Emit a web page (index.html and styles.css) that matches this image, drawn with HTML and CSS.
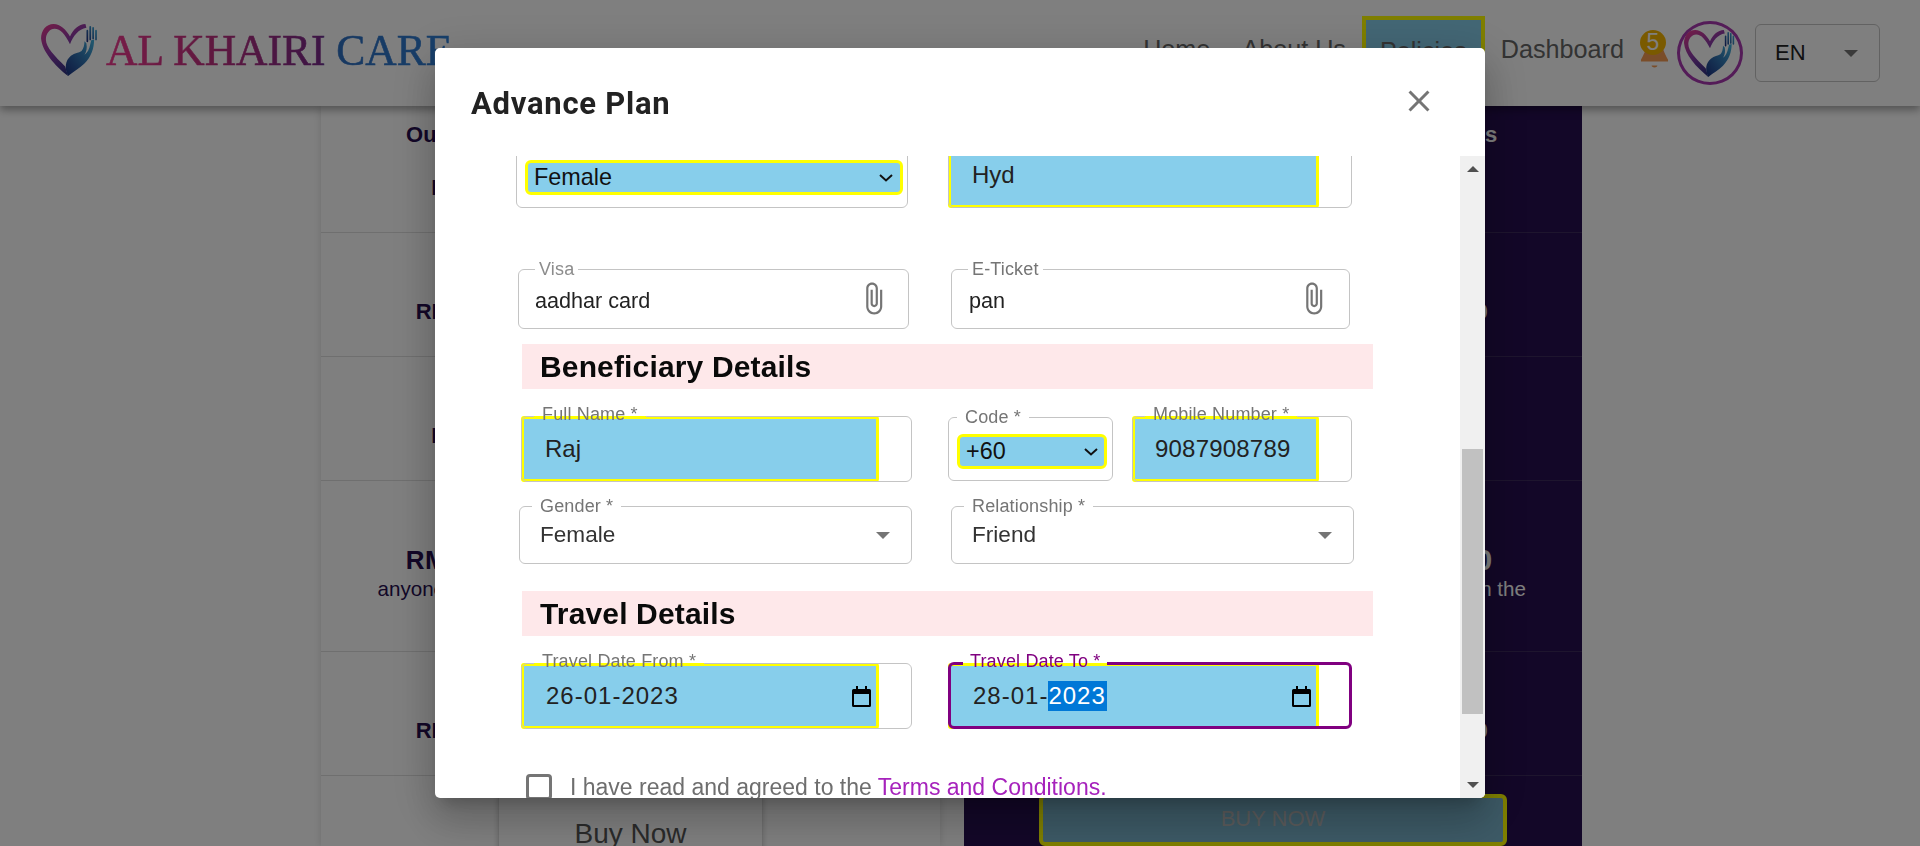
FILE: index.html
```html
<!DOCTYPE html>
<html lang="en">
<head>
    <meta charset="UTF-8">
    <meta name="viewport" content="width=device-width, initial-scale=1.0">
    <title>Al Khairi Care - Policies</title>
    <link rel="stylesheet" href="styles.css">
</head>
<body>
    <svg class="defs" width="0" height="0">
        <defs>
            <linearGradient id="heartGrad" x1="0" y1="0" x2="0.6" y2="1">
                <stop offset="0" stop-color="#f03a90"/>
                <stop offset="0.5" stop-color="#8a3aa8"/>
                <stop offset="1" stop-color="#24327e"/>
            </linearGradient>
            <linearGradient id="handGrad" x1="1" y1="0" x2="0" y2="1">
                <stop offset="0" stop-color="#44b4e0"/>
                <stop offset="1" stop-color="#1c2f80"/>
            </linearGradient>
            <symbol id="heartLogo" viewBox="0 0 60 56">
                <path fill="url(#heartGrad)" d="M30 14C26 7 20 1 13 1 5 1 0 8 0 16c1 13 14 28 28 39-1-3-2-7-3-10C14 34 5 25 5 17 5 11 9 6 14 6c6 0 11 6 16 16 3-8 9-16 17-17l-1-4c-7 0-13 6-16 13z"/>
                <path fill="url(#handGrad)" d="M28 55c-4-8-3-16 3-21 4-3 8-3 11-5 2-2 3-6 3-10l2 2c1 5 0 9-2 12 3-2 5-6 6-11l1-4 3-1c0 9-3 18-10 25-5 5-11 8-17 13z"/>
                <path fill="none" stroke="url(#handGrad)" stroke-width="1.8" stroke-linecap="round" d="M48 19V8M51 17V4M54 16V5M57 17V8"/>
            </symbol>
        </defs>
    </svg>

    <header class="topbar">
        <a class="logo">
            <svg class="logo-mark"><use href="#heartLogo"/></svg>
            <span class="logo-text">AL KHAIRI CARE</span>
        </a>
        <nav class="nav">
            <a class="nav-link">Home</a>
            <a class="nav-link">About Us</a>
            <a class="nav-link nav-active">Policies</a>
            <a class="nav-link">Dashboard</a>
        </nav>
        <div class="bell">
            <svg class="bell-icon" viewBox="0 0 30 40">
                <path fill="#f59a52" d="M8 10h14c1 8 3 13 7 20v2H1v-2c4-7 6-12 7-20z"/>
                <path fill="#f59a52" d="M12 36h6c0 1-1 2-3 2s-3-1-3-2z"/>
            </svg>
            <span class="bell-count">5</span>
        </div>
        <div class="avatar">
            <svg class="avatar-mark"><use href="#heartLogo"/></svg>
        </div>
        <div class="lang">
            <span>EN</span>
            <span class="caret"></span>
        </div>
    </header>

    <main class="plans">
        <section class="plan plan-light">
            <div class="plan-row row-head">
                <b class="row-title">Our Advance Care Plan Coverage Benefits</b>
                <b class="row-sub">RM 100,000 Personal Trip Cover Limit.</b>
            </div>
            <div class="plan-row"><b>RM 500,000 Accidental Death RM 500,000</b></div>
            <div class="plan-row"><b>RM 100,000 Personal Trip Cover Limit.</b></div>
            <div class="plan-row row-tall">
                <b class="big">RM 100,000 Travel Cover RM 10,000</b>
                <span class="small">anyone who is staying or traveling abroad with us in the</span>
            </div>
            <div class="plan-row"><b>RM 500,000 Accidental Death RM 500,000</b></div>
            <div class="plan-foot"><a class="buy-light">Buy Now</a></div>
        </section>
        <section class="plan plan-dark">
            <div class="plan-row row-head">
                <b class="row-title">Our Advance Care Plan Coverage Benefits</b>
                <b class="row-sub">RM 100,000 Personal Trip Cover Limit.</b>
            </div>
            <div class="plan-row"><b>RM 500,000 Accidental Death RM 500,000</b></div>
            <div class="plan-row"><b>RM 100,000 Personal Trip Cover Limit.</b></div>
            <div class="plan-row row-tall">
                <b class="big">RM 1,000,000 Travel RM 10,000</b>
                <span class="small">anyone who is staying or traveling abroad with us in the</span>
            </div>
            <div class="plan-row"><b>RM 500,000 Accidental Death RM 500,000</b></div>
            <div class="plan-foot"><a class="buy-dark">BUY NOW</a></div>
        </section>
    </main>

    <div class="backdrop"></div>

    <div class="modal">
        <div class="modal-head">
            <h2>Advance Plan</h2>
            <svg class="close" viewBox="0 0 24 24"><path d="M19 6.41 17.59 5 12 10.59 6.41 5 5 6.41 10.59 12 5 17.59 6.41 19 12 13.41 17.59 19 19 17.59 13.41 12z"/></svg>
        </div>
        <div class="modal-body">
            <form class="form">
                <div class="form-row row-first">
                    <div class="field f-top-left">
                        <div class="native-select select-wide">
                            <span>Female</span>
                            <svg class="chevron" viewBox="0 0 14 8"><path d="M1 1l6 5.5L13 1"/></svg>
                        </div>
                        <div class="outline-plain"></div>
                    </div>
                    <div class="field f-top-right">
                        <div class="fill fill-long">Hyd</div>
                        <div class="outline-plain"></div>
                    </div>
                </div>

                <div class="form-row row-files">
                    <div class="field f-visa">
                        <span class="value">aadhar card</span>
                        <svg class="clip" viewBox="0 0 24 24"><path d="M16.5 6v11.5c0 2.21-1.79 4-4 4s-4-1.79-4-4V5c0-1.38 1.12-2.5 2.5-2.5s2.5 1.12 2.5 2.5v10.5c0 .55-.45 1-1 1s-1-.45-1-1V6H10v9.5c0 1.38 1.12 2.5 2.5 2.5s2.5-1.12 2.5-2.5V5c0-2.21-1.79-4-4-4S7 2.79 7 5v12.5c0 3.04 2.46 5.5 5.5 5.5s5.5-2.46 5.5-5.5V6h-1.5z"/></svg>
                        <fieldset class="outline outline-tight"><legend class="legend-light">Visa</legend></fieldset>
                    </div>
                    <div class="field f-ticket">
                        <span class="value">pan</span>
                        <svg class="clip" viewBox="0 0 24 24"><path d="M16.5 6v11.5c0 2.21-1.79 4-4 4s-4-1.79-4-4V5c0-1.38 1.12-2.5 2.5-2.5s2.5 1.12 2.5 2.5v10.5c0 .55-.45 1-1 1s-1-.45-1-1V6H10v9.5c0 1.38 1.12 2.5 2.5 2.5s2.5-1.12 2.5-2.5V5c0-2.21-1.79-4-4-4S7 2.79 7 5v12.5c0 3.04 2.46 5.5 5.5 5.5s5.5-2.46 5.5-5.5V6h-1.5z"/></svg>
                        <fieldset class="outline outline-tight"><legend>E-Ticket</legend></fieldset>
                    </div>
                </div>

                <h3 class="band band-first">Beneficiary Details</h3>

                <div class="form-row row-name">
                    <div class="field f-name">
                        <div class="fill fill-left">Raj</div>
                        <fieldset class="outline outline-raised"><legend>Full Name *</legend></fieldset>
                    </div>
                    <div class="phone">
                        <div class="field f-code">
                            <div class="native-select select-code">
                                <span>+60</span>
                                <svg class="chevron" viewBox="0 0 14 8"><path d="M1 1l6 5.5L13 1"/></svg>
                            </div>
                            <fieldset class="outline outline-code"><legend>Code *</legend></fieldset>
                        </div>
                        <div class="field f-mobile">
                            <div class="fill fill-mobile">9087908789</div>
                            <fieldset class="outline outline-raised"><legend>Mobile Number *</legend></fieldset>
                        </div>
                    </div>
                </div>

                <div class="form-row row-gender">
                    <div class="field f-gender">
                        <span class="picked">Female</span>
                        <span class="drop"></span>
                        <fieldset class="outline"><legend>Gender *</legend></fieldset>
                    </div>
                    <div class="field f-relation">
                        <span class="picked">Friend</span>
                        <span class="drop"></span>
                        <fieldset class="outline"><legend>Relationship *</legend></fieldset>
                    </div>
                </div>

                <h3 class="band band-second">Travel Details</h3>

                <div class="form-row row-dates">
                    <div class="field f-name">
                        <div class="fill fill-left fill-date">
                            <span>26-01-2023</span>
                            <svg class="cal" viewBox="0 0 19 21"><path d="M4 0h2v3h7V0h2v3h2.5A1.5 1.5 0 0 1 19 4.5v15a1.5 1.5 0 0 1-1.5 1.5h-16A1.5 1.5 0 0 1 0 19.5v-15A1.5 1.5 0 0 1 1.5 3H4zM2 8v11h15V8z"/></svg>
                        </div>
                        <fieldset class="outline outline-raised"><legend>Travel Date From *</legend></fieldset>
                    </div>
                    <div class="field f-date-to">
                        <div class="fill fill-long fill-date">
                            <span>28-01-<span class="selected">2023</span></span>
                            <svg class="cal" viewBox="0 0 19 21"><path d="M4 0h2v3h7V0h2v3h2.5A1.5 1.5 0 0 1 19 4.5v15a1.5 1.5 0 0 1-1.5 1.5h-16A1.5 1.5 0 0 1 0 19.5v-15A1.5 1.5 0 0 1 1.5 3H4zM2 8v11h15V8z"/></svg>
                        </div>
                        <fieldset class="outline outline-focus outline-raised"><legend>Travel Date To *</legend></fieldset>
                    </div>
                </div>

                <label class="agree">
                    <span class="checkbox"></span>
                    <span>I have read and agreed to the <a class="terms">Terms and Conditions.</a></span>
                </label>
            </form>
            <div class="scrollbar">
                <span class="sb-up"></span>
                <span class="sb-thumb"></span>
                <span class="sb-down"></span>
            </div>
        </div>
    </div>
</body>
</html>
```

FILE: styles.css
```css
* {
    box-sizing: border-box;
}
body {
    margin: 0;
    height: 846px;
    overflow: hidden;
    background: #fff;
    font-family: "Liberation Sans", Arial, sans-serif;
    color: #222;
}
.defs {
    position: absolute;
}

/* top bar */
.topbar {
    position: relative;
    z-index: 2;
    display: flex;
    align-items: center;
    height: 106px;
    padding: 0 40px 0 41px;
    background: #fff;
    box-shadow: 0 4px 8px rgba(0, 0, 0, 0.35);
}
.logo {
    display: flex;
    align-items: center;
    gap: 7px;
    margin-bottom: 6px;
}
.logo-mark {
    width: 58px;
    height: 54px;
}
.logo-text {
    font-family: "Liberation Serif", serif;
    font-size: 43.5px;
    line-height: 50px;
    white-space: nowrap;
    background: linear-gradient(90deg, #f03a90 0, #c0307f 30%, #7a2a8a 62%, #2f6fc0 66%, #2f80d8 100%);
    -webkit-background-clip: text;
    background-clip: text;
    color: transparent;
    -webkit-text-stroke: 0.6px transparent;
}
.nav {
    display: flex;
    align-items: center;
    margin-left: auto;
    margin-bottom: 8px;
    font-size: 25.2px;
    color: #666;
}
.nav-link {
    padding: 0 16px;
}
.nav-active {
    padding: 17px 14px 13px;
    border: 4px solid #ffff00;
    background: #87ceeb;
}
.bell {
    position: relative;
    width: 29px;
    height: 40px;
    margin-bottom: 6px;
}
.bell-icon {
    width: 29px;
    height: 40px;
}
.bell-count {
    position: absolute;
    top: 0;
    left: 0;
    width: 26px;
    height: 25px;
    border-radius: 50%;
    background: #f5b400;
    color: #fff;
    font-size: 23px;
    line-height: 25px;
    text-align: center;
}
.avatar {
    display: flex;
    align-items: center;
    justify-content: center;
    width: 66px;
    height: 64px;
    margin-left: 8px;
    border: 3px solid #a838b0;
    border-radius: 50%;
}
.avatar-mark {
    width: 52px;
    height: 49px;
}
.lang {
    display: flex;
    align-items: center;
    justify-content: space-between;
    width: 125px;
    height: 58px;
    margin-left: 12px;
    padding: 0 21px 0 19px;
    border: 1px solid #c4c4c4;
    border-radius: 6px;
    font-size: 22px;
    color: #222;
}
.caret {
    border-left: 7px solid transparent;
    border-right: 7px solid transparent;
    border-top: 7px solid #757575;
}

/* plans behind the dialog */
.plans {
    display: grid;
    grid-template-columns: 619px 618px;
    column-gap: 24px;
    margin-left: 321px;
    font-size: 22px;
    text-align: center;
}
.plan {
    height: 740px;
    overflow: hidden;
}
.plan-light {
    color: #260e50;
    box-shadow: 0 0 8px rgba(0, 0, 0, 0.15);
}
.plan-dark {
    background: #260e50;
    color: #fff;
}
.plan-row {
    display: flex;
    flex-direction: column;
    justify-content: center;
    height: 124px;
    padding-top: 34px;
    border-bottom: 1px solid rgba(128, 128, 128, 0.25);
}
.row-head {
    height: 127px;
    padding-top: 17px;
    justify-content: flex-start;
    line-height: 24px;
}
.row-title {
    letter-spacing: 0.15px;
}
.row-sub {
    margin-top: 29px;
}
.row-tall {
    height: 171px;
    padding-top: 14px;
}
.big {
    font-size: 26px;
    line-height: 32px;
    letter-spacing: 0.3px;
}
.plan-dark .big {
    font-size: 30px;
    letter-spacing: 0;
}
.small {
    font-size: 20.6px;
    line-height: 26px;
}
.plan-foot {
    display: flex;
    justify-content: center;
    padding-top: 18px;
}
.buy-light {
    width: 265px;
    height: 78px;
    border: 1px solid #ddd;
    box-shadow: 0 0 6px rgba(0, 0, 0, 0.2);
    font-size: 28px;
    line-height: 78px;
    color: #555;
}
.buy-dark {
    width: 468px;
    height: 52px;
    border: 4px solid #ffff00;
    border-radius: 6px;
    background: #7ab4cc;
    font-size: 22px;
    line-height: 42px;
    color: #b8b8b8;
}
.backdrop {
    position: fixed;
    inset: 0;
    z-index: 3;
    background: rgba(0, 0, 0, 0.5);
}

/* dialog */
.modal {
    position: fixed;
    z-index: 4;
    top: 48px;
    left: 435px;
    display: flex;
    flex-direction: column;
    width: 1050px;
    height: 750px;
    background: #fff;
    border-radius: 5px;
    overflow: hidden;
    box-shadow: 0 11px 15px -7px rgba(0, 0, 0, 0.2), 0 24px 38px 3px rgba(0, 0, 0, 0.14), 0 9px 46px 8px rgba(0, 0, 0, 0.12);
}
.modal-head {
    display: flex;
    align-items: center;
    justify-content: space-between;
    flex: none;
    height: 108px;
    padding: 0 48px 0 36px;
}
.modal-head h2 {
    margin: 2px 0 0;
    font-family: Roboto, sans-serif;
    font-size: 31px;
    font-weight: 700;
    letter-spacing: 0.75px;
    color: #222;
}
.close {
    width: 36px;
    height: 36px;
    margin-top: -2px;
    fill: #757575;
}
.modal-body {
    display: flex;
    flex: 1;
    min-height: 0;
}
.form {
    flex: 1;
    min-width: 0;
    overflow: hidden;
    padding-left: 81px;
}
.form-row {
    display: grid;
    grid-template-columns: 400px 406px;
    column-gap: 32px;
    align-items: start;
}
.row-first {
    margin-top: -14px;
}
.row-files {
    margin-top: 61px;
}
.row-name {
    margin-top: 27px;
}
.row-gender {
    margin-top: 24px;
}
.row-dates {
    margin-top: 27px;
}

/* fields: the fieldset draws the outline and its notch, as in Material UI */
.field {
    position: relative;
    height: 66px;
}
.outline {
    position: absolute;
    inset: -9px 0 0 0;
    min-width: 0;
    margin: 0;
    padding: 0 0 0 12px;
    border: 1px solid #c4c4c4;
    border-radius: 6px;
    pointer-events: none;
}
.outline-plain {
    position: absolute;
    inset: 0;
    border: 1px solid #c4c4c4;
    border-radius: 6px;
}
.outline legend {
    padding: 0 8px;
    font-size: 18px;
    line-height: 19px;
    letter-spacing: 0.15px;
    color: #757575;
    white-space: nowrap;
}
.outline .legend-light {
    color: #8c8c8c;
}
.outline-raised legend {
    position: relative;
    top: -2px;
}
.outline-tight {
    padding-left: 16px;
}
.outline-tight legend {
    padding: 0 4px;
}
.outline-code {
    padding-left: 8px;
}
.outline-focus {
    padding-left: 12px;
    border: 3px solid #800080;
}
.outline-focus legend {
    padding: 0 7px;
    color: #800080;
}
.f-top-left {
    width: 392px;
}
.f-top-right {
    width: 404px;
}
.f-visa,
.f-ticket {
    display: flex;
    align-items: center;
    justify-content: space-between;
    height: 60px;
}
.f-visa {
    width: 391px;
    margin-left: 2px;
    padding: 0 18px 0 17px;
}
.f-ticket {
    width: 399px;
    margin-left: 3px;
    padding: 0 19px 0 18px;
}
.value {
    margin-top: 4px;
    font-size: 21.6px;
    color: #222;
}
.clip {
    width: 35px;
    height: 35px;
    margin-top: -2px;
    fill: #757575;
}
.f-name {
    width: 391px;
    margin-left: 5px;
}
.f-gender {
    width: 393px;
    margin-left: 3px;
}
.f-relation {
    width: 403px;
    margin-left: 3px;
}
.f-gender,
.f-relation {
    display: flex;
    align-items: center;
    justify-content: space-between;
    height: 58px;
    padding: 0 22px 0 21px;
}
.picked {
    font-size: 22.6px;
    color: #333;
}
.drop {
    border-left: 7px solid transparent;
    border-right: 7px solid transparent;
    border-top: 7px solid #757575;
}
.phone {
    display: flex;
    gap: 19px;
}
.f-code {
    width: 165px;
    height: 64px;
    margin-top: 1px;
}
.f-mobile {
    width: 220px;
}
.f-date-to {
    width: 404px;
}

/* highlighted inputs */
.fill {
    display: flex;
    align-items: center;
    height: 100%;
    border: 3px solid #ffff00;
    border-radius: 3px;
    background: #87ceeb;
    font-size: 24px;
    color: #222;
}
.fill-left {
    width: 358px;
    padding-left: 21px;
}
.fill-long {
    width: 371px;
    padding-left: 21px;
}
.fill-mobile {
    width: 187px;
    padding-left: 20px;
    letter-spacing: 0.2px;
}
.fill-date {
    justify-content: space-between;
    padding-left: 22px;
    padding-right: 5px;
    letter-spacing: 1px;
}
.cal {
    width: 19px;
    height: 21px;
    fill: #000;
}
.selected {
    display: inline-block;
    height: 30px;
    padding-right: 1px;
    line-height: 30px;
    background: #0078d7;
    color: #fff;
}
.native-select {
    display: flex;
    align-items: center;
    justify-content: space-between;
    height: 35px;
    border: 3px solid #ffff00;
    border-radius: 6px;
    background: #87ceeb;
    font-size: 23.4px;
    color: #111;
}
.select-wide {
    position: relative;
    top: 18px;
    width: 378px;
    margin-left: 9px;
    padding: 0 7px 0 6px;
}
.select-code {
    position: relative;
    top: 17px;
    width: 150px;
    margin-left: 9px;
    padding: 0 6px;
}
.chevron {
    width: 14px;
    height: 8px;
    fill: none;
    stroke: #111;
    stroke-width: 2;
}

/* section headings */
.band {
    height: 45px;
    margin: 0 0 0 6px;
    width: 851px;
    padding-left: 18px;
    background: #fee8ea;
    font-size: 30px;
    font-weight: 700;
    line-height: 45px;
    letter-spacing: 0.15px;
    color: #0a0a0a;
}
.band-first {
    margin-top: 15px;
}
.band-second {
    margin-top: 27px;
}
.agree {
    display: flex;
    align-items: center;
    gap: 18px;
    height: 26px;
    margin: 45px 0 0 10px;
    font-size: 23px;
    color: #6e6e6e;
}
.checkbox {
    flex: none;
    width: 26px;
    height: 26px;
    border: 3px solid #757575;
    border-radius: 4px;
}
.terms {
    color: #a622bc;
}

/* scrollbar */
.scrollbar {
    display: flex;
    flex-direction: column;
    align-items: center;
    flex: none;
    width: 25px;
    background: #f0f0f0;
}
.sb-up,
.sb-down {
    width: 0;
    border-left: 6px solid transparent;
    border-right: 6px solid transparent;
}
.sb-up {
    margin-top: 10px;
    border-bottom: 6px solid #505050;
}
.sb-thumb {
    width: 21px;
    height: 265px;
    margin-top: 277px;
    background: #c1c1c1;
}
.sb-down {
    margin-top: 68px;
    border-top: 6px solid #505050;
}
```
